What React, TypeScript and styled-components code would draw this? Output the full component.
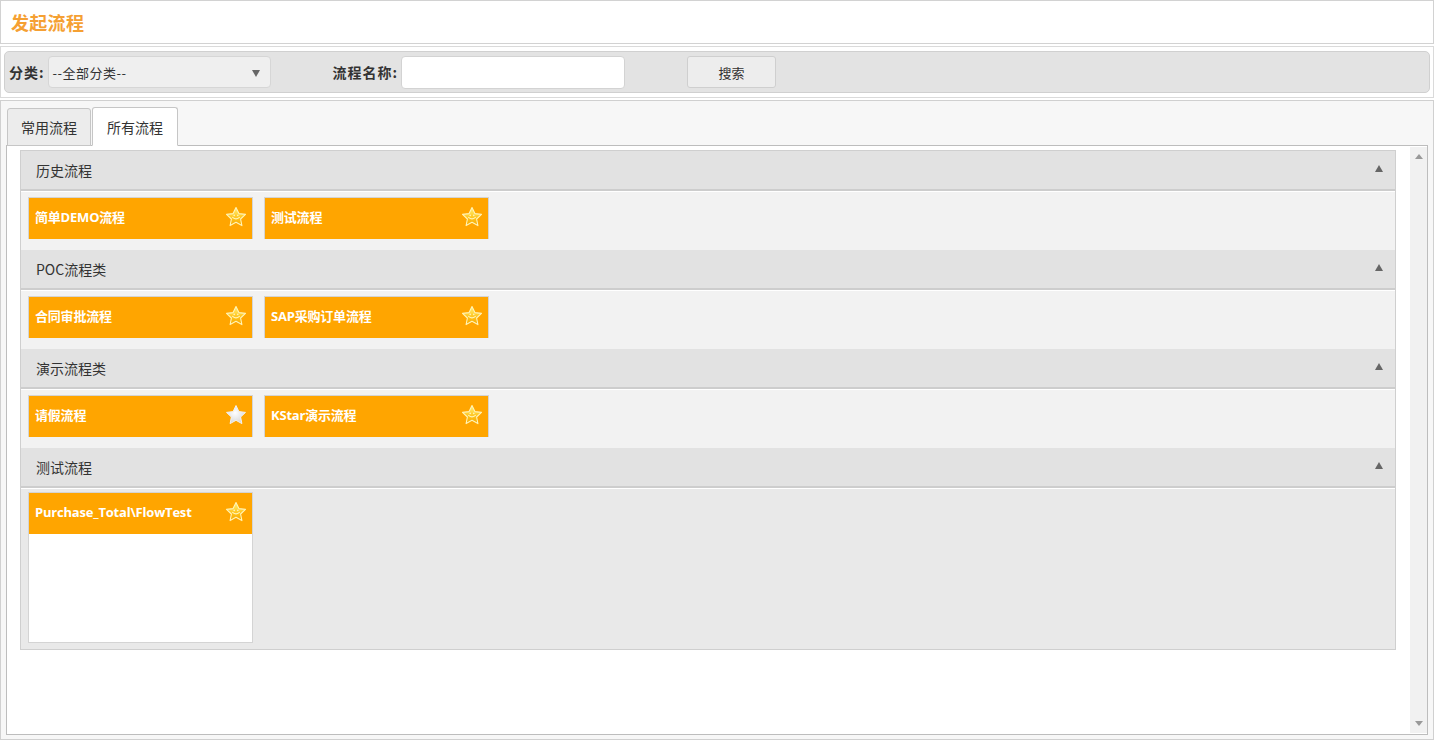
import styled, { createGlobalStyle } from 'styled-components';

//type
interface Flow {
  name: string;
  starred?: boolean;
}

interface Group {
  title: string;
  flows: Flow[];
  tall?: boolean;
}

const groups: Group[] = [
  { title: '历史流程', flows: [{ name: '简单DEMO流程' }, { name: '测试流程' }] },
  { title: 'POC流程类', flows: [{ name: '合同审批流程' }, { name: 'SAP采购订单流程' }] },
  { title: '演示流程类', flows: [{ name: '请假流程', starred: true }, { name: 'KStar演示流程' }] },
  { title: '测试流程', flows: [{ name: 'Purchase_Total\\FlowTest' }], tall: true },
];

//styled component
const GlobalStyle = createGlobalStyle`
  body {
    margin: 0;
    background: #ffffff;
    font-family: "Noto Sans CJK SC", "Open Sans", sans-serif;
    color: #333;
  }
`;

const Page = styled.div`
  width: 1434px;
  height: 742px;
  display: flex;
  flex-direction: column;
  gap: 2px;
  box-sizing: border-box;
`;

const TitleBar = styled.div`
  height: 44px;
  box-sizing: border-box;
  border: 1px solid #d2d2d2;
  background: #fff;
  display: flex;
  align-items: center;
  padding-left: 10px;
  color: #f5a033;
  font-size: 18px;
  font-weight: 700;
  letter-spacing: 0.3px;
`;

const FilterOuter = styled.div`
  box-sizing: border-box;
  height: 52px;
  border: 1px solid #dadada;
  padding: 4px 3px;
  background: #fff;
`;

const FilterBar = styled.div`
  height: 42px;
  box-sizing: border-box;
  border: 1px solid #d0d0d0;
  border-radius: 5px;
  background: #e3e3e3;
  display: flex;
  align-items: center;
  padding-left: 4px;
`;

const Label = styled.span<{ $gap?: number }>`
  font-size: 14px;
  font-weight: 700;
  color: #333;
  letter-spacing: 1px;
  margin-left: ${(p) => p.$gap ?? 0}px;
  margin-right: 3px;
`;

const Select = styled.div`
  width: 223px;
  height: 32px;
  box-sizing: border-box;
  border: 1px solid #d6d6d6;
  border-radius: 4px;
  background: #efefef;
  display: flex;
  align-items: center;
  justify-content: space-between;
  padding: 0 10px 0 4px;
  font-size: 13px;
  letter-spacing: 0.5px;
  color: #333;
  & .arrow {
    width: 0;
    height: 0;
    border-left: 4px solid transparent;
    border-right: 4px solid transparent;
    border-top: 7px solid #666;
    margin-top: 2px;
  }
`;

const TextInput = styled.input`
  width: 224px;
  height: 33px;
  box-sizing: border-box;
  border: 1px solid #d3d3d3;
  border-radius: 4px;
  background: #fff;
  outline: none;
`;

const Button = styled.button`
  margin-left: 62px;
  width: 89px;
  height: 32px;
  box-sizing: border-box;
  border: 1px solid #cfcfcf;
  border-radius: 3px;
  background: #ededed;
  font-family: "Noto Sans CJK SC", sans-serif;
  font-size: 13px;
  color: #333;
`;

const Main = styled.div`
  flex: 1;
  box-sizing: border-box;
  border: 1px solid #d0d0d0;
  background: #f7f7f7;
  padding: 6px 5px 4px 5px;
  display: flex;
  flex-direction: column;
  margin-bottom: 2px;
`;

const Tabs = styled.div`
  display: flex;
  align-items: flex-end;
  padding-left: 1px;
  margin-bottom: -1px;
  position: relative;
  z-index: 1;
`;

const Tab = styled.div<{ $active?: boolean }>`
  height: ${(p) => (p.$active ? 39 : 38)}px;
  box-sizing: border-box;
  border: 1px solid #c6c6c6;
  border-bottom: 1px solid ${(p) => (p.$active ? '#fff' : '#c6c6c6')};
  border-radius: 3px 3px 0 0;
  background: ${(p) => (p.$active ? '#fff' : '#ececec')};
  padding: 0 ${(p) => (p.$active ? 14 : 13)}px;
  display: flex;
  align-items: center;
  font-size: 14px;
  color: #333;
  margin-right: 1px;
`;

const Panel = styled.div`
  flex: 1;
  box-sizing: border-box;
  border: 1px solid #bdbdbd;
  background: #fff;
  display: flex;
  min-height: 0;
`;

const Scroller = styled.div`
  flex: 1;
  padding: 4px 14px 0 13px;
`;

const ScrollTrack = styled.div`
  width: 17px;
  margin: 1px 0;
  background: #f1f1f1;
  display: flex;
  flex-direction: column;
  justify-content: space-between;
  align-items: center;
  padding: 7px 0;
  box-sizing: border-box;
`;

const ScrollArrow = styled.span<{ $down?: boolean }>`
  width: 0;
  height: 0;
  border-left: 4px solid transparent;
  border-right: 4px solid transparent;
  ${(p) => (p.$down ? 'border-top: 5px solid #999;' : 'border-bottom: 5px solid #999;')}
`;

const Accordion = styled.div`
  border: 1px solid #cfcfcf;
  background: #fff;
`;

const SectionHead = styled.div`
  height: 40px;
  box-sizing: border-box;
  background: #e2e2e2;
  border-bottom: 2px solid #cdcdcd;
  display: flex;
  align-items: center;
  justify-content: space-between;
  padding: 0 12px 0 15px;
  font-size: 14px;
  color: #333;
  & .caret {
    width: 0;
    height: 0;
    border-left: 4px solid transparent;
    border-right: 4px solid transparent;
    border-bottom: 7px solid #666;
    margin-top: -3px;
  }
`;

const SectionBody = styled.div<{ $tall?: boolean }>`
  background: ${(p) => (p.$tall ? '#e9e9e9' : '#f2f2f2')};
  border-top: 1px solid #fff;
  padding: ${(p) => (p.$tall ? '3px 7px 6px' : '5px 7px 11px')};
  display: flex;
  gap: 11px;
`;

const Card = styled.div<{ $tall?: boolean }>`
  width: 225px;
  height: ${(p) => (p.$tall ? 151 : 42)}px;
  box-sizing: border-box;
  border: 1px solid #d4d4d4;
  background: #fff;
  display: flex;
  flex-direction: column;
`;

const CardHead = styled.div`
  height: 41px;
  flex-shrink: 0;
  box-sizing: border-box;
  background: #ffa500;
  display: flex;
  align-items: center;
  justify-content: space-between;
  padding: 0 4px 4px 6px;
  color: #fff;
  font-size: 13px;
  font-weight: 700;
  font-family: "Open Sans", "Noto Sans CJK SC", sans-serif;
  letter-spacing: -0.2px;
`;

function StarIcon({ filled = false }: { filled?: boolean }) {
  if (filled) {
    return (
      <svg width="24" height="24" viewBox="0 0 24 24">
        <defs>
          <radialGradient id="ws" cx="45%" cy="40%" r="60%">
            <stop offset="0%" stopColor="#ffffff" />
            <stop offset="100%" stopColor="#d8d8d8" />
          </radialGradient>
        </defs>
        <path
          d="M12 2.5l2.9 6.1 6.6.8-4.9 4.6 1.3 6.6L12 17.3l-5.9 3.3 1.3-6.6-4.9-4.6 6.6-.8z"
          fill="url(#ws)"
          stroke="#f2f2f2"
          strokeWidth="1"
          strokeLinejoin="round"
        />
      </svg>
    );
  }
  return (
    <svg width="24" height="24" viewBox="0 0 24 24">
      <defs>
        <linearGradient id="gs" x1="0" y1="0" x2="0" y2="1">
          <stop offset="0%" stopColor="#fff27a" />
          <stop offset="60%" stopColor="#ffc21a" />
          <stop offset="100%" stopColor="#f5a800" />
        </linearGradient>
      </defs>
      <path
        d="M12 2.5l2.9 6.1 6.6.8-4.9 4.6 1.3 6.6L12 17.3l-5.9 3.3 1.3-6.6-4.9-4.6 6.6-.8z"
        fill="url(#gs)"
        stroke="#fff4b8"
        strokeWidth="1.1"
        strokeLinejoin="round"
      />
      <path d="M8.6 12.4q3.4 3 6.8 0" fill="none" stroke="#fff4b8" strokeWidth="1.1" strokeLinecap="round" />
      <circle cx="10.2" cy="10.4" r="0.8" fill="#fff4b8" />
      <circle cx="13.8" cy="10.4" r="0.8" fill="#fff4b8" />
    </svg>
  );
}

function FlowCard({ flow, tall }: { flow: Flow; tall?: boolean }) {
  return (
    <Card $tall={tall}>
      <CardHead>
        <span>{flow.name}</span>
        <StarIcon filled={flow.starred} />
      </CardHead>
    </Card>
  );
}

function App() {
  return (
    <Page>
      <GlobalStyle />
      <TitleBar>发起流程</TitleBar>
      <FilterOuter>
        <FilterBar>
          <Label>分类:</Label>
          <Select>
            <span>--全部分类--</span>
            <span className="arrow" />
          </Select>
          <Label $gap={62}>流程名称:</Label>
          <TextInput />
          <Button>搜索</Button>
        </FilterBar>
      </FilterOuter>
      <Main>
        <Tabs>
          <Tab>常用流程</Tab>
          <Tab $active>所有流程</Tab>
        </Tabs>
        <Panel>
          <Scroller>
            <Accordion>
              {groups.map((g) => (
                <div key={g.title}>
                  <SectionHead>
                    <span>{g.title}</span>
                    <span className="caret" />
                  </SectionHead>
                  <SectionBody $tall={g.tall}>
                    {g.flows.map((f) => (
                      <FlowCard key={f.name} flow={f} tall={g.tall} />
                    ))}
                  </SectionBody>
                </div>
              ))}
            </Accordion>
          </Scroller>
          <ScrollTrack>
            <ScrollArrow />
            <ScrollArrow $down />
          </ScrollTrack>
        </Panel>
      </Main>
    </Page>
  );
}

export default App;
